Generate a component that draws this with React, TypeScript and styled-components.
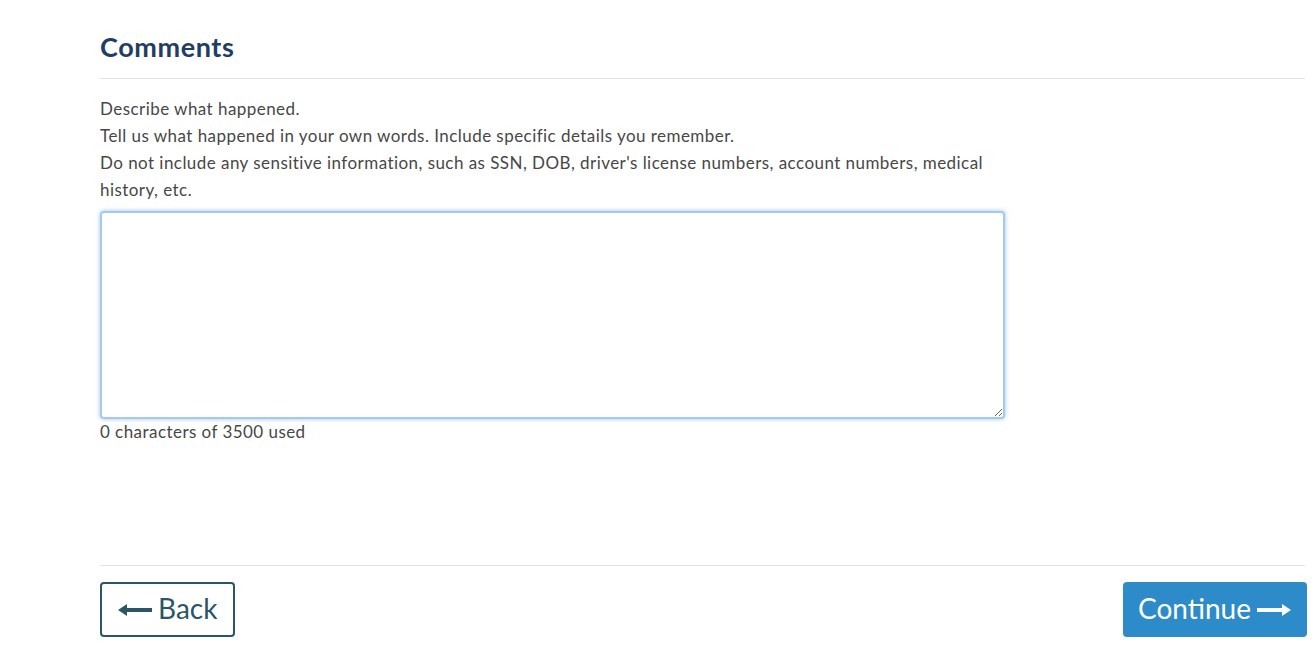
import styled, { createGlobalStyle } from 'styled-components';

const GlobalStyle = createGlobalStyle`
  body {
    margin: 0;
    background: #fff;
    font-family: Lato, "Liberation Sans", sans-serif;
  }
`;

export default function App() {
  return (
    <Page>
      <GlobalStyle />
      <Heading>Comments</Heading>
      <Divider />
      <Intro>
        <p>Describe what happened.</p>
        <p>Tell us what happened in your own words. Include specific details you remember.</p>
        <p>Do not include any sensitive information, such as SSN, DOB, driver's license numbers, account numbers, medical history, etc.</p>
      </Intro>
      <CommentBox maxLength={3500} />
      <Counter>0 characters of 3500 used</Counter>
      <Footer>
        <BackButton>
          <Arrow viewBox="0 0 34 14">
            <path d="M0 7 L9 1 L9 5 L34 5 L34 9 L9 9 L9 13 Z" fill="currentColor" />
          </Arrow>
          Back
        </BackButton>
        <ContinueButton>
          Continue
          <Arrow viewBox="0 0 34 14">
            <path d="M34 7 L25 1 L25 5 L0 5 L0 9 L25 9 L25 13 Z" fill="currentColor" />
          </Arrow>
        </ContinueButton>
      </Footer>
    </Page>
  );
}

const Page = styled.div`
  width: 1207px;
  margin-left: 100px;
  padding-top: 30px;
`;

const Heading = styled.h2`
  margin: 0;
  font-size: 27px;
  font-weight: 700;
  letter-spacing: 0.6px;
  color: #1f3e63;
  line-height: 34px;
`;

const Divider = styled.hr`
  border: 0;
  border-top: 1px solid #e3e3e3;
  margin: 14px 2px 0 0;
`;

const Intro = styled.div`
  width: 904px;
  margin-top: 16px;
  p {
    margin: 0;
    font-size: 17px;
    letter-spacing: 0.45px;
    line-height: 27px;
    color: #474747;
  }
`;

const CommentBox = styled.textarea`
  display: block;
  box-sizing: border-box;
  width: 905px;
  height: 208px;
  margin-top: 8px;
  border: 2px solid #a6c9ee;
  border-radius: 4px;
  box-shadow: 0 0 4px rgba(110, 165, 230, 0.7);
  outline: none;
  resize: vertical;
`;

const Counter = styled.div`
  font-size: 17px;
  letter-spacing: 0.45px;
  line-height: 26px;
  color: #474747;
`;

const Footer = styled.div`
  margin-top: 120px;
  padding-top: 16px;
  border-top: 1px solid #e3e3e3;
  margin-right: 2px;
  display: flex;
  justify-content: space-between;
  align-items: center;
`;

const ButtonBase = styled.button`
  box-sizing: border-box;
  height: 55px;
  padding-bottom: 4px;
  border-radius: 4px;
  font-family: Lato, "Liberation Sans", sans-serif;
  font-size: 28px;
  display: flex;
  align-items: center;
  gap: 6px;
  cursor: pointer;
`;

const BackButton = styled(ButtonBase)`
  width: 135px;
  padding-left: 16px;
  padding-right: 16px;
  background: #fff;
  border: 2px solid #2b5666;
  color: #2b5666;
`;

const ContinueButton = styled(ButtonBase)`
  width: 184px;
  margin-right: -2px;
  padding-left: 15px;
  padding-right: 14px;
  background: #2e8bc9;
  border: 0;
  color: #fff;
`;

const Arrow = styled.svg`
  width: 34px;
  height: 14px;
  flex-shrink: 0;
  margin-top: 4px;
`;
